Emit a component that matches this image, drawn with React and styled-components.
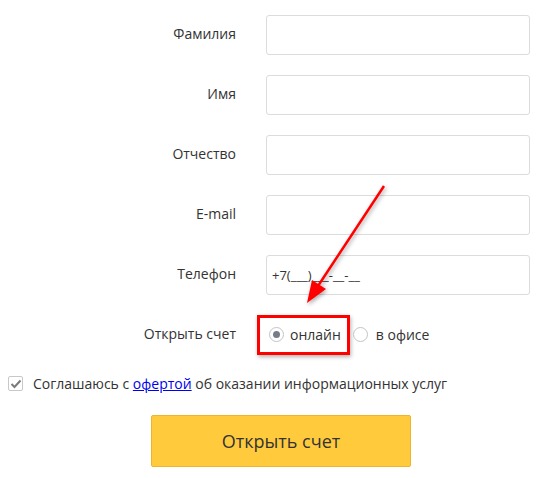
import React from "react";
import styled, { createGlobalStyle } from "styled-components";

const GlobalStyle = createGlobalStyle`
  body {
    margin: 0;
    background: #fff;
    font-family: "Open Sans", "Liberation Sans", sans-serif;
    color: #333;
  }
`;

const fields = [
  { label: "Фамилия", value: "" },
  { label: "Имя", value: "" },
  { label: "Отчество", value: "" },
  { label: "E-mail", value: "" },
  { label: "Телефон", value: "+7(___)___-__-__" },
];

const App = () => {
  return (
    <Page>
      <GlobalStyle />
      <Form>
        {fields.map((f) => (
          <Row key={f.label}>
            <Label>{f.label}</Label>
            <Input defaultValue={f.value} />
          </Row>
        ))}
        <Row>
          <Label>Открыть счет</Label>
          <Options>
            <Highlight>
              <Option>
                <Radio $checked />
                онлайн
              </Option>
            </Highlight>
            <Option $wide>
              <Radio />в офисе
            </Option>
          </Options>
        </Row>
      </Form>

      <Agree>
        <CheckBox>
          <svg width="12" height="10" viewBox="0 0 12 10">
            <path d="M1.5 5 L4.5 8 L10.5 1.5" fill="none" stroke="#7a7a7a" strokeWidth="2" />
          </svg>
        </CheckBox>
        <span>
          Соглашаюсь с <a href="#">офертой</a> об оказании информационных услуг
        </span>
      </Agree>

      <Submit>Открыть счет</Submit>

      <Arrow width="544" height="478" viewBox="0 0 544 478">
        <defs>
          <filter id="shadow" x="-50%" y="-50%" width="200%" height="200%">
            <feDropShadow dx="1" dy="2" stdDeviation="2" floodColor="#000" floodOpacity="0.35" />
          </filter>
        </defs>
        <g filter="url(#shadow)">
          <line x1="384" y1="186" x2="316" y2="289" stroke="#f00" strokeWidth="2.5" />
          <polygon points="307,303 326,289 312,280" fill="#f00" />
        </g>
      </Arrow>
    </Page>
  );
};

const Page = styled.div`
  position: relative;
  width: 544px;
  height: 478px;
  padding-top: 15px;
  box-sizing: border-box;
`;

const Form = styled.div`
  display: grid;
  row-gap: 20px;
`;

const Row = styled.div`
  display: grid;
  grid-template-columns: 236px 264px;
  column-gap: 30px;
  align-items: center;
  height: 40px;
`;

const Label = styled.label`
  text-align: right;
  font-size: 14px;
  color: #333;
  padding-bottom: 3px;
`;

const Input = styled.input`
  box-sizing: border-box;
  width: 264px;
  height: 40px;
  border: 1px solid #dcdcdc;
  border-radius: 3px;
  padding: 0 0 0 5px;
  font-family: "Open Sans", "Liberation Sans", sans-serif;
  font-size: 13px;
  color: #333;
  outline: none;
`;

const Options = styled.div`
  display: flex;
  align-items: center;
  margin-left: -9px;
  font-size: 14px;
`;

const Highlight = styled.div`
  display: flex;
  align-items: center;
  height: 40px;
  box-sizing: border-box;
  padding: 0 6px 0 6px;
  border: 3px solid #f00;
  box-shadow: 1px 2px 4px rgba(0, 0, 0, 0.3);
`;

const Option = styled.span`
  display: flex;
  align-items: center;
  gap: ${(p) => (p.$wide ? "8px" : "6px")};
  margin-left: 3px;
  padding-bottom: 1px;
  color: #333;
`;

const Radio = styled.span`
  box-sizing: border-box;
  width: 15px;
  height: 15px;
  border-radius: 50%;
  border: 1px solid #c4c4c4;
  background: #fff;
  display: flex;
  align-items: center;
  justify-content: center;
  &::after {
    content: "";
    width: 7px;
    height: 7px;
    border-radius: 50%;
    background: ${(p) => (p.$checked ? "#777d88" : "transparent")};
  }
`;

const Agree = styled.div`
  display: flex;
  align-items: center;
  gap: 10px;
  margin: 19px 0 0 8px;
  font-size: 14px;
  color: #333;
  a {
    color: #0000ee;
    text-decoration: underline;
  }
`;

const CheckBox = styled.span`
  box-sizing: border-box;
  width: 15px;
  height: 15px;
  border: 1px solid #c8c8c8;
  border-radius: 2px;
  display: flex;
  align-items: center;
  justify-content: center;
`;

const Submit = styled.button`
  display: block;
  box-sizing: border-box;
  margin: 22px 0 0 151px;
  width: 260px;
  height: 52px;
  background: #ffcb3d;
  border: 1px solid #efb52a;
  border-radius: 2px;
  font-family: "Open Sans", "Liberation Sans", sans-serif;
  font-size: 18px;
  color: #333;
`;

const Arrow = styled.svg`
  position: absolute;
  left: 0;
  top: 0;
  pointer-events: none;
`;

export default App;
